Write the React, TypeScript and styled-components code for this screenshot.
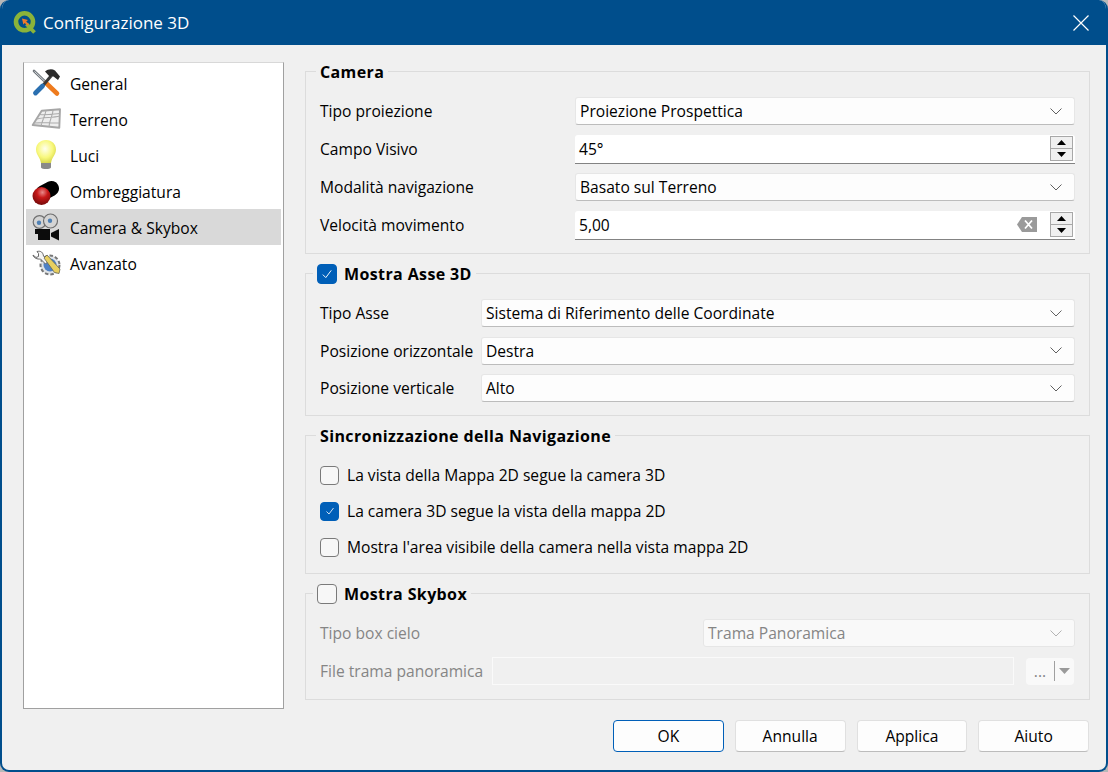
import React from 'react';
import styled, { createGlobalStyle } from 'styled-components';

const GlobalStyle = createGlobalStyle`
  html, body {
    margin: 0;
    padding: 0;
    background: #b8b8b8;
  }
  body {
    font-family: "Open Sans", "Noto Sans", "Liberation Sans", sans-serif;
    font-size: 15.6px;
    color: #000;
  }
`;

const Window = styled.div`
  width: 1108px;
  height: 772px;
  box-sizing: border-box;
  display: flex;
  flex-direction: column;
  border: solid #004e8c;
  border-width: 0 2px 2px;
  border-radius: 9px;
  overflow: hidden;
  background: #f0f0f0;
`;

const TitleBar = styled.header`
  height: 45px;
  flex: none;
  margin: 0 -2px;
  padding: 0 19px 0 13px;
  display: flex;
  align-items: center;
  gap: 6px;
  background: #004e8c;
  color: #fff;
`;

const TitleText = styled.span`
  flex: 1;
  font-size: 17px;
`;

const CloseButton = styled.button`
  width: 16px;
  height: 16px;
  padding: 0;
  border: 0;
  background: none;
  display: flex;
`;

const Body = styled.div`
  flex: 1;
  display: flex;
  flex-direction: column;
  padding: 15px 16px 18px 21px;
`;

const Content = styled.div`
  display: flex;
  gap: 21px;
  height: 649px;
`;

const Sidebar = styled.nav`
  width: 261px;
  flex: none;
  box-sizing: border-box;
  margin-top: 2px;
  padding: 2px;
  background: #fff;
  border: 1px solid #a0a0a0;
  border-top-color: #d8d8d8;
`;

const NavItem = styled.div<{ $active?: boolean }>`
  height: 36px;
  display: flex;
  align-items: center;
  gap: 9px;
  padding-left: 5px;
  background: ${({ $active }) => ($active ? '#d9d9d9' : 'transparent')};
`;

const NavIcon = styled.svg`
  width: 30px;
  height: 30px;
  flex: none;
`;

const NavLabel = styled.span`
  padding-top: 2px;
`;

const Main = styled.main`
  flex: 1;
  display: flex;
  flex-direction: column;
  gap: 8px;
`;

const Group = styled.fieldset<{ $top: number; $bottom: number; $gap: number }>`
  margin: 0;
  min-width: 0;
  padding: ${({ $top }) => $top}px 14px ${({ $bottom }) => $bottom}px 14px;
  border: 1px solid #dcdcdc;
  display: flex;
  flex-direction: column;
  gap: ${({ $gap }) => $gap}px;
`;

const Legend = styled.legend<{ $check?: boolean }>`
  margin-left: ${({ $check }) => ($check ? -7 : -4)}px;
  padding: 2px 4px 0;
  box-sizing: border-box;
  height: 22px;
  display: flex;
  align-items: center;
  gap: 7px;
  font-weight: 700;
  font-size: 16px;
  letter-spacing: 0.38px;
`;

const Row = styled.div<{ $label: number }>`
  display: grid;
  grid-template-columns: ${({ $label }) => $label}px 1fr;
  align-items: center;
`;

const FileRow = styled.div`
  display: grid;
  grid-template-columns: 172px 1fr 48px;
  align-items: center;
  padding-right: 1px;
`;

const Label = styled.span<{ $disabled?: boolean }>`
  color: ${({ $disabled }) => ($disabled ? '#858585' : '#000')};
  white-space: nowrap;
`;

const Combo = styled.div<{ $disabled?: boolean }>`
  height: 28px;
  box-sizing: border-box;
  display: flex;
  align-items: center;
  justify-content: space-between;
  padding: 0 12px 0 4px;
  border: 1px solid #e6e6e6;
  border-bottom-color: ${({ $disabled }) => ($disabled ? '#e6e6e6' : '#bcbcbc')};
  border-radius: 3px;
  background: ${({ $disabled }) => ($disabled ? '#f9f9f9' : '#fdfdfd')};
  color: ${({ $disabled }) => ($disabled ? '#858585' : '#000')};
`;

const Chevron = styled.svg<{ $disabled?: boolean }>`
  width: 12px;
  height: 7px;
  fill: none;
  stroke: ${({ $disabled }) => ($disabled ? '#b5b5b5' : '#606060')};
  stroke-width: 1;
`;

const Spin = styled.div`
  height: 29px;
  box-sizing: border-box;
  display: flex;
  align-items: center;
  gap: 13px;
  padding: 0 2px 0 4px;
  background: #fff;
  border-bottom: 1px solid #838383;
  border-radius: 3px 3px 0 0;
`;

const SpinValue = styled.span`
  flex: 1;
`;

const SpinButtons = styled.div`
  width: 23px;
  height: 25px;
  flex: none;
  display: flex;
  flex-direction: column;
`;

const SpinButton = styled.div`
  flex: 1;
  display: flex;
  align-items: center;
  justify-content: center;
  background: #f0f0f0;
  border: 1px solid #a8a8a8;

  & + & {
    border-top: 0;
  }
`;

const Arrow = styled.svg`
  width: 9px;
  height: 5px;
  fill: #000;
`;

const CheckRow = styled.label`
  display: flex;
  align-items: center;
  gap: 8px;
  height: 20px;
`;

const Box = styled.span<{ $on?: boolean; $size: number }>`
  width: ${({ $size }) => $size}px;
  height: ${({ $size }) => $size}px;
  box-sizing: border-box;
  flex: none;
  display: flex;
  align-items: center;
  justify-content: center;
  border-radius: 4px;
  background: ${({ $on }) => ($on ? '#005fb8' : '#f7f7f7')};
  border: 1px solid ${({ $on }) => ($on ? '#005fb8' : '#7a7a7a')};
`;

const FileInput = styled.div`
  height: 28px;
  box-sizing: border-box;
  margin-right: 12px;
  background: #f0f0f0;
  border: 1px solid #fafafa;
`;

const ToolButton = styled.div`
  height: 27px;
  box-sizing: border-box;
  display: flex;
  align-items: center;
  border-radius: 4px;
  background: #f9f9f9;
  color: #858585;
`;

const ToolDots = styled.span`
  flex: 1;
  text-align: center;
  line-height: 27px;
`;

const ToolArrow = styled.span`
  width: 19px;
  height: 20px;
  display: flex;
  align-items: center;
  justify-content: center;
  border-left: 1px solid #a0a0a0;
`;

const Footer = styled.footer`
  display: flex;
  justify-content: flex-end;
  gap: 11px;
  padding-right: 1px;
  margin-top: 11px;
`;

const Button = styled.button<{ $primary?: boolean }>`
  width: 110.75px;
  height: 32px;
  padding: 0;
  font: inherit;
  color: #000;
  background: #fdfdfd;
  border: 1px solid ${({ $primary }) => ($primary ? '#005fb8' : '#e0e0e0')};
  border-bottom-color: ${({ $primary }) => ($primary ? '#005fb8' : '#bcbcbc')};
  border-radius: 4px;
`;

const QgisLogo = () => (
  <svg width="24" height="24" viewBox="0 0 24 24">
    <circle cx="11.5" cy="10.8" r="8.5" fill="none" stroke="#8ab33a" strokeWidth="4.6" />
    <path d="M13.500 13l8 8.500" stroke="#8ab33a" strokeWidth="3.8" />
    <path d="M9 7.500l6 1.500-1.800 1.500 2.700 2.700-1.500 1.500-2.600-2.800-1.500 1.600z" fill="#ee7a2a" />
  </svg>
);

const ToolsIcon = () => (
  <NavIcon viewBox="0 0 30 30">
    <path d="M3 3l12 11.500" stroke="#70767c" strokeWidth="2.600" strokeLinecap="round" />
    <path d="M3.500 3.500l11.500 11" stroke="#d5d9dc" strokeWidth="1" />
    <path d="M15 15l11 10.500" stroke="#ee7b1e" strokeWidth="4.600" strokeLinecap="round" />
    <path d="M12 17.500L20 8" stroke="#3a3a3a" strokeWidth="3" />
    <path d="M11.500 18L4.500 25" stroke="#2a6fb0" strokeWidth="4.800" strokeLinecap="round" />
    <path d="M14 3.500C17 1 21 0.500 24 2.500l5 6-2 3.500-4.500-3.500-3.500 0.500z" fill="#2c2c2c" />
  </NavIcon>
);

const TerrainIcon = () => (
  <NavIcon viewBox="0 0 30 30">
    <path d="M10.700 6.700L29 5.300l-.7 18.400-26.600-2.700z" fill="#eeeeee" stroke="#a6a6a6" strokeWidth="1.900" strokeLinejoin="round" />
    <path d="M6 15c7-2 15-1 23-3M8.500 10.500c7 1 14-.5 20-1M15 6.500c-1 6-4 10-5 15.500M22 6c0 6-4 10-4 17M4 19c7-1 14 0 24 0" fill="none" stroke="#ababab" strokeWidth="1.100" />
  </NavIcon>
);

const BulbIcon = () => (
  <NavIcon viewBox="0 0 30 30">
    <defs>
      <radialGradient id="bulb" cx=".45" cy=".38" r=".7">
        <stop offset="0" stopColor="#fffff0" />
        <stop offset=".55" stopColor="#f8f87c" />
        <stop offset="1" stopColor="#cfcf40" />
      </radialGradient>
    </defs>
    <path d="M15 0C9 0 5 4.400 5 9.500c0 5 4 7.500 5 13.500h10c1-6 5-8.500 5-13.500C25 4.400 21 0 15 0z" fill="url(#bulb)" />
    <path d="M10 23h10v4.500c-1 2-9 2-10 0z" fill="#8a8a8a" />
  </NavIcon>
);

const ShadingIcon = () => (
  <NavIcon viewBox="0 0 30 30">
    <defs>
      <radialGradient id="ball" cx=".55" cy=".3" r=".75">
        <stop offset="0" stopColor="#e88a8a" />
        <stop offset=".4" stopColor="#c81818" />
        <stop offset="1" stopColor="#6a0808" />
      </radialGradient>
    </defs>
    <path d="M12 17L20.500 12.500" stroke="#000" strokeWidth="15" strokeLinecap="round" />
    <circle cx="10.500" cy="20" r="9" fill="url(#ball)" />
  </NavIcon>
);

const CameraIcon = () => (
  <NavIcon viewBox="0 0 30 30">
    <circle cx="8.500" cy="10" r="6.300" fill="#d4d4d4" stroke="#6f6f6f" strokeWidth="1.200" />
    <circle cx="19.500" cy="9" r="7" fill="#d4d4d4" stroke="#6f6f6f" strokeWidth="1.200" />
    <circle cx="8" cy="10.700" r="2.200" fill="#4f81b5" />
    <circle cx="19" cy="8.700" r="2.200" fill="#4f81b5" />
    <path d="M4 17h15v11H7v-6H4z" fill="#0c0c0c" />
    <path d="M20 21l8-4v11.500l-8-4z" fill="#0c0c0c" />
  </NavIcon>
);

const AdvancedIcon = () => (
  <NavIcon viewBox="0 0 30 30">
    <circle cx="19" cy="17" r="9.500" fill="#dfe3e6" stroke="#777" strokeWidth="2" strokeDasharray="3.500 2" />
    <circle cx="19" cy="17" r="6.500" fill="#4f81c5" />
    <path d="M2 7l3 2.500 2.500-1L7.500 5.500 6 3.500c4-1 6 1 6.500 4.500l5 5-3 3-5-5c-3 .5-7-1-7.500-4z" fill="#f4f4f4" stroke="#666" strokeWidth="1" />
    <path d="M13 10l3-3 13 14-1 4.500-4.500-1z" fill="#e8cf60" stroke="#665" strokeWidth=".8" />
  </NavIcon>
);

const ChevronDown = ({ disabled }: { disabled?: boolean }) => (
  <Chevron $disabled={disabled} viewBox="0 0 12 7">
    <path d="M.5.500L6 6l5.500-5.500" />
  </Chevron>
);

const Tick = ({ size }: { size: number }) => (
  <svg width={size} height={size} viewBox="0 0 10 10" fill="none" stroke="#fff" strokeWidth=".8">
    <path d="M1.500 5.500L4 8l4.500-6" />
  </svg>
);

const ComboField = ({ value, disabled }: { value: string; disabled?: boolean }) => (
  <Combo $disabled={disabled}>
    <span>{value}</span>
    <ChevronDown disabled={disabled} />
  </Combo>
);

const SpinField = ({ value, clear }: { value: string; clear?: boolean }) => (
  <Spin>
    <SpinValue>{value}</SpinValue>
    {clear && (
      <svg width="20" height="15" viewBox="0 0 20 15">
        <path d="M0 7.500L5 0h15v15H5z" fill="#9a9a9a" />
        <path d="M8 3.500l7 8m0-8l-7 8" stroke="#fff" strokeWidth="1.800" />
      </svg>
    )}
    <SpinButtons>
      <SpinButton>
        <Arrow viewBox="0 0 9 5">
          <path d="M4.500 0L9 5H0z" />
        </Arrow>
      </SpinButton>
      <SpinButton>
        <Arrow viewBox="0 0 9 5">
          <path d="M0 0h9L4.500 5z" />
        </Arrow>
      </SpinButton>
    </SpinButtons>
  </Spin>
);

const navItems = [
  { label: 'General', icon: <ToolsIcon /> },
  { label: 'Terreno', icon: <TerrainIcon /> },
  { label: 'Luci', icon: <BulbIcon /> },
  { label: 'Ombreggiatura', icon: <ShadingIcon /> },
  { label: 'Camera & Skybox', icon: <CameraIcon />, active: true },
  { label: 'Avanzato', icon: <AdvancedIcon /> },
];

export default function App() {
  return (
    <Window>
      <GlobalStyle />
      <TitleBar>
        <QgisLogo />
        <TitleText>Configurazione 3D</TitleText>
        <CloseButton aria-label="Chiudi">
          <svg width="16" height="16" viewBox="0 0 16 16" stroke="#fff" strokeWidth="1.200">
            <path d="M.5.500l15 15m0-15l-15 15" />
          </svg>
        </CloseButton>
      </TitleBar>
      <Body>
        <Content>
          <Sidebar>
            {navItems.map((item) => (
              <NavItem key={item.label} $active={item.active}>
                {item.icon}
                <NavLabel>{item.label}</NavLabel>
              </NavItem>
            ))}
          </Sidebar>
          <Main>
            <Group $top={15} $bottom={13.5} $gap={9.5}>
              <Legend>Camera</Legend>
              <Row $label={255}>
                <Label>Tipo proiezione</Label>
                <ComboField value="Proiezione Prospettica" />
              </Row>
              <Row $label={255}>
                <Label>Campo Visivo</Label>
                <SpinField value="45°" />
              </Row>
              <Row $label={255}>
                <Label>Modalità navigazione</Label>
                <ComboField value="Basato sul Terreno" />
              </Row>
              <Row $label={255}>
                <Label>Velocità movimento</Label>
                <SpinField value="5,00" clear />
              </Row>
            </Group>
            <Group $top={15} $bottom={13} $gap={9.5}>
              <Legend $check>
                <Box $on $size={20}>
                  <Tick size={12} />
                </Box>
                Mostra Asse 3D
              </Legend>
              <Row $label={161}>
                <Label>Tipo Asse</Label>
                <ComboField value="Sistema di Riferimento delle Coordinate" />
              </Row>
              <Row $label={161}>
                <Label>Posizione orizzontale</Label>
                <ComboField value="Destra" />
              </Row>
              <Row $label={161}>
                <Label>Posizione verticale</Label>
                <ComboField value="Alto" />
              </Row>
            </Group>
            <Group $top={19} $bottom={16} $gap={16}>
              <Legend>Sincronizzazione della Navigazione</Legend>
              <CheckRow>
                <Box $size={19} />
                La vista della Mappa 2D segue la camera 3D
              </CheckRow>
              <CheckRow>
                <Box $on $size={19}>
                  <Tick size={10} />
                </Box>
                La camera 3D segue la vista della mappa 2D
              </CheckRow>
              <CheckRow>
                <Box $size={19} />
                Mostra l'area visibile della camera nella vista mappa 2D
              </CheckRow>
            </Group>
            <Group $top={15} $bottom={14} $gap={10}>
              <Legend $check>
                <Box $size={20} />
                Mostra Skybox
              </Legend>
              <Row $label={383}>
                <Label $disabled>Tipo box cielo</Label>
                <ComboField value="Trama Panoramica" disabled />
              </Row>
              <FileRow>
                <Label $disabled>File trama panoramica</Label>
                <FileInput />
                <ToolButton>
                  <ToolDots>...</ToolDots>
                  <ToolArrow>
                    <svg width="11" height="6" viewBox="0 0 11 6" fill="#9a9a9a">
                      <path d="M0 0h11L5.500 6z" />
                    </svg>
                  </ToolArrow>
                </ToolButton>
              </FileRow>
            </Group>
          </Main>
        </Content>
        <Footer>
          <Button $primary>OK</Button>
          <Button>Annulla</Button>
          <Button>Applica</Button>
          <Button>Aiuto</Button>
        </Footer>
      </Body>
    </Window>
  );
}
